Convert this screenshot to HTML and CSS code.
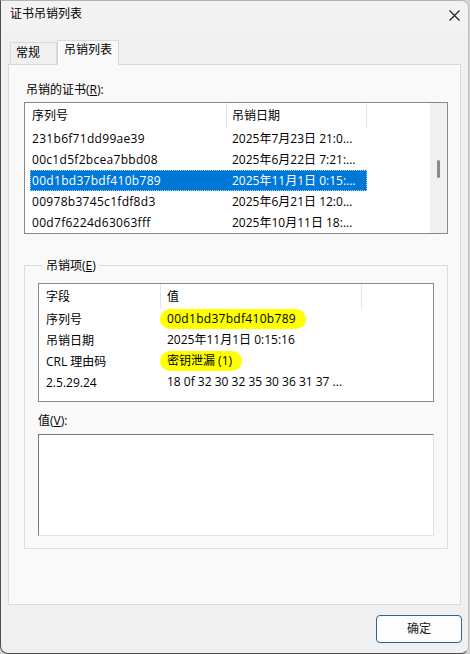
FILE: index.html
```html
<!DOCTYPE html>
<html lang="zh-CN">
<head>
<meta charset="utf-8">
<title>证书吊销列表</title>
<link rel="stylesheet" href="styles.css">
</head>
<body>
<div class="window">
  <div class="titlebar">
    <span class="title">证书吊销列表</span>
    <svg class="close" width="11" height="11" viewBox="0 0 11 11"><path d="M0.5 0.5 L10.5 10.5 M10.5 0.5 L0.5 10.5" stroke="#1a1a1a" stroke-width="1.1" fill="none"/></svg>
  </div>
  <div class="body">
    <div class="tabs">
      <div class="tab">常规</div>
      <div class="tab active">吊销列表</div>
    </div>
    <div class="panel">
      <div class="label top-label">吊销的证书(<u>R</u>):</div>
      <div class="listbox list1">
        <div class="table">
          <div class="row head"><div class="c1">序列号</div><div class="c2">吊销日期</div></div>
          <div class="row"><div class="c1 sn">231b6f71dd99ae39</div><div class="c2">2025年7月23日 21:0...</div></div>
          <div class="row"><div class="c1 sn">00c1d5f2bcea7bbd08</div><div class="c2">2025年6月22日 7:21:...</div></div>
          <div class="row selected"><div class="c1 sn">00d1bd37bdf410b789</div><div class="c2">2025年11月1日 0:15:...</div></div>
          <div class="row"><div class="c1 sn">00978b3745c1fdf8d3</div><div class="c2">2025年6月21日 12:0...</div></div>
          <div class="row"><div class="c1 sn">00d7f6224d63063fff</div><div class="c2">2025年10月11日 18:...</div></div>
        </div>
        <div class="scrollbar"><div class="thumb"></div></div>
      </div>
      <div class="group">
        <div class="group-label">吊销项(<u>E</u>)</div>
        <div class="listbox list2">
          <div class="row head"><div class="c1">字段</div><div class="c2">值</div></div>
          <div class="row"><div class="c1">序列号</div><div class="c2"><span class="val hl sn">00d1bd37bdf410b789</span></div></div>
          <div class="row"><div class="c1">吊销日期</div><div class="c2"><span class="val">2025年11月1日 0:15:16</span></div></div>
          <div class="row"><div class="c1">CRL 理由码</div><div class="c2"><span class="val hl">密钥泄漏 (1)</span></div></div>
          <div class="row"><div class="c1">2.5.29.24</div><div class="c2"><span class="val">18 0f 32 30 32 35 30 36 31 37 ...</span></div></div>
        </div>
        <div class="label value-label">值(<u>V</u>):</div>
        <div class="valuebox"></div>
      </div>
    </div>
    <div class="footer">
      <button class="ok">确定</button>
    </div>
  </div>
</div>
</body>
</html>
```
FILE: styles.css
```css
* { box-sizing: border-box; }
html, body { margin: 0; padding: 0; }
body {
  background: #d4d4d4;
  font-family: "Segoe UI", "Open Sans", "Noto Sans CJK SC", sans-serif;
  font-size: 12px;
  color: #000;
}
u { text-decoration: underline; text-underline-offset: 1px; }

.window {
  width: 469px;
  height: 654px;
  border: 1px solid;
  border-color: #b4b4b4 #bcbcbc #4e4e4e #4e4e4e;
  border-radius: 0 8px 8px 8px;
  background: #f0f0f0;
  overflow: hidden;
  display: flex;
  flex-direction: column;
}

.titlebar {
  height: 30px;
  flex: none;
  background: #f3f3f3;
  display: flex;
  align-items: center;
  justify-content: space-between;
  padding: 0 8px 4px 9px;
}
.title { line-height: 16px; font-size: 12px; }
.close { display: block; margin-top: 2px; }

.body { flex: 1; display: flex; flex-direction: column; }

.tabs {
  height: 24px;
  margin: 9px 0 0 9px;
  display: flex;
  align-items: flex-end;
}
.tab {
  height: 22px;
  width: 47px;
  border: 1px solid #d9d9d9;
  border-bottom: none;
  background: #f0f0f0;
  padding-left: 5px;
  line-height: 20px;
}
.tab.active {
  position: relative;
  z-index: 1;
  height: 25px;
  width: 62px;
  margin-bottom: -1px;
  background: #f9f9f9;
  padding-left: 6px;
  line-height: 18px;
}

.panel {
  height: 541px;
  margin: 0 7px 0 7px;
  border: 1px solid #d9d9d9;
  background: #f9f9f9;
  padding: 17px 12px 0 15px;
}

.label { line-height: 16px; }
.top-label { margin-left: 2px; }

.listbox {
  background: #fff;
  border: 1px solid #85898f;
}
.list1 {
  margin-top: 4px;
  height: 132px;
  display: flex;
}
.table {
  flex: 1;
  padding-left: 5px;
  overflow: hidden;
}
.row { display: flex; height: 21px; line-height: 21px; white-space: nowrap; }
.row.head { height: 25px; line-height: 25px; }
.row > div { overflow: hidden; }
.sn { letter-spacing: 0.3px; }

.list1 .c1 { width: 196px; padding-left: 2px; }
.list1 .c2 { width: 141px; padding-left: 6px; }
.list1 .head .c2 {
  border-left: 1px solid #e5e5e5;
  border-right: 1px solid #e5e5e5;
  padding-left: 5px;
}
.row.selected {
  width: 337px;
  background: #0078d7;
  color: #fff;
  outline: 1px dotted #9fd0f5;
  outline-offset: -1px;
}

.scrollbar {
  width: 17px;
  flex: none;
  background: #f0f0f0;
  padding-top: 57px;
  display: flex;
  justify-content: center;
}
.thumb {
  width: 3px;
  height: 18px;
  background: #8a8a8a;
  border-radius: 1.5px;
}

.group {
  margin-top: 31px;
  border: 1px solid #dcdcdc;
  padding: 0 13px 12px 13px;
}
.group-label {
  width: fit-content;
  margin: -8px 0 0 5px;
  padding: 0 3px;
  background: #f9f9f9;
  line-height: 16px;
}

.list2 {
  margin-top: 9px;
  height: 119px;
  border-color: #8a8a8a;
}
.list2 .c1 { width: 121px; padding-left: 7px; }
.list2 .c2 { width: 202px; }
.list2 .head .c2 {
  border-left: 1px solid #e5e5e5;
  border-right: 1px solid #e5e5e5;
  padding-left: 6px;
}
.val {
  display: inline-block;
  height: 20px;
  line-height: 20px;
  vertical-align: top;
  padding: 0 10px 0 7px;
  border-radius: 10px;
}
.val.hl { background: #ffff00; }

.value-label { margin-top: 11px; }
.valuebox {
  margin-top: 5px;
  height: 102px;
  background: #fff;
  border-top: 1px solid #7a7a7a;
  border-left: 1px solid #7a7a7a;
  border-right: 1px solid #e3e3e3;
  border-bottom: 1px solid #e3e3e3;
}

.footer {
  display: flex;
  justify-content: flex-end;
  padding: 10px 6px 0 0;
}
.ok {
  width: 86px;
  height: 28px;
  border: 1px solid #2b6499;
  border-radius: 4px;
  background: #fdfdfd;
  font-family: inherit;
  font-size: 12px;
  color: #1a1a1a;
  line-height: 16px;
  padding: 0;
}
```
